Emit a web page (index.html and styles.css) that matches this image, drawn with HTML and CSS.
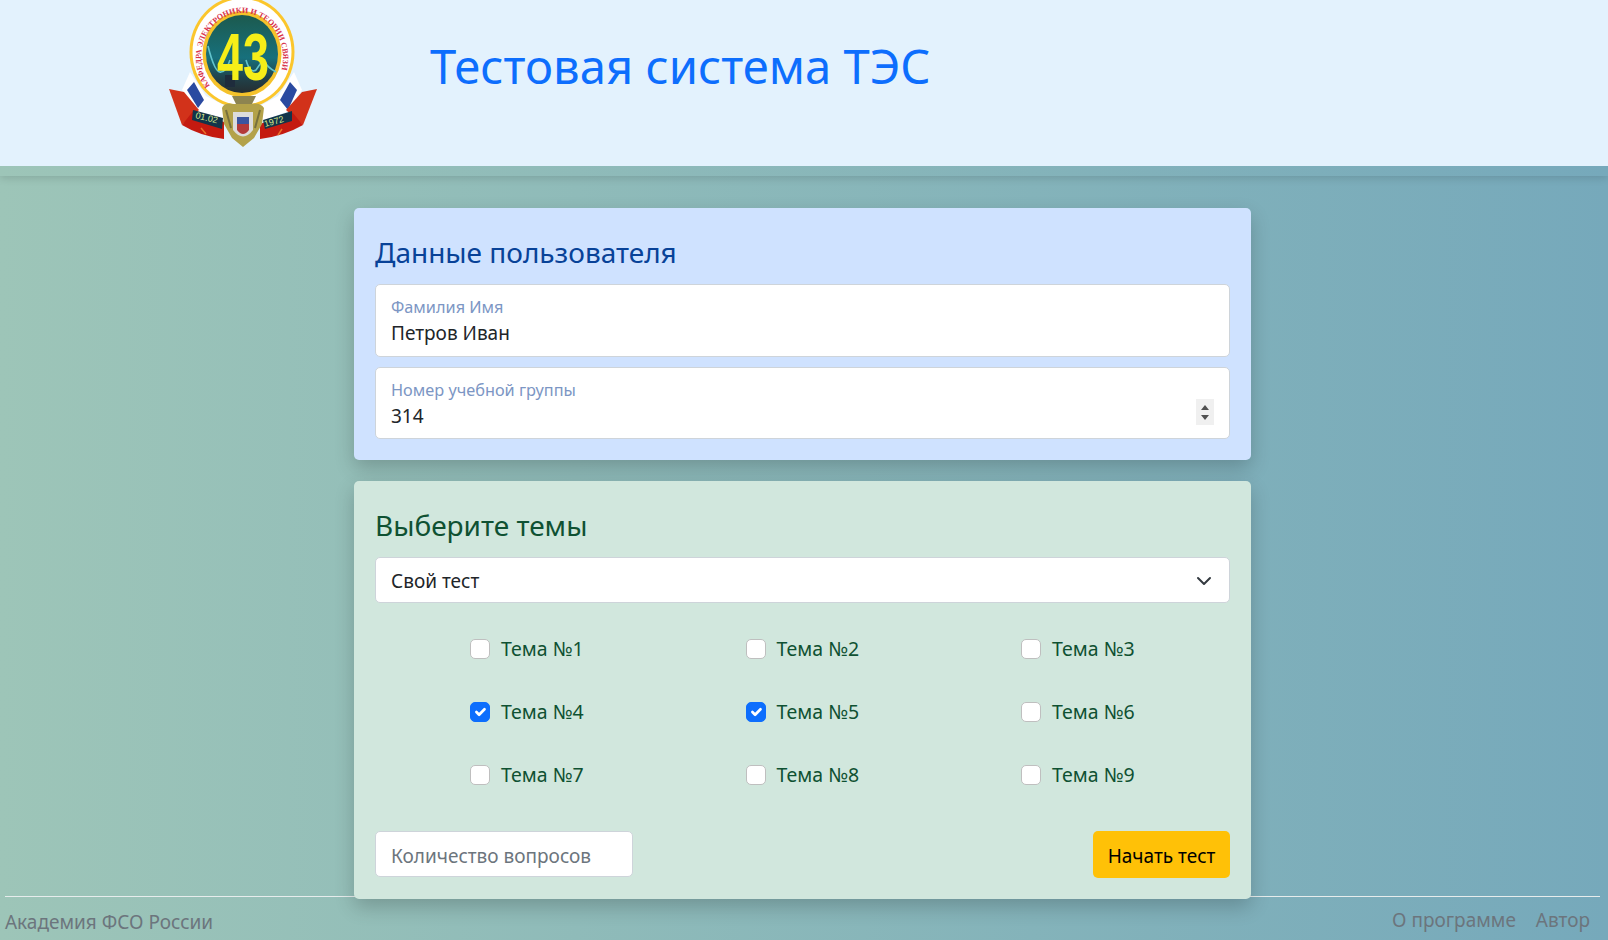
FILE: index.html
```html
<!DOCTYPE html>
<html lang="ru">
<head>
    <meta charset="UTF-8">
    <meta name="viewport" content="width=device-width, initial-scale=1.0">
    <title>Тестовая система ТЭС</title>
    <link rel="stylesheet" href="styles.css">
</head>
<body>
    <header class="top">
        <div class="logo">
            <svg width="152" height="150" viewBox="0 0 152 150">
                <defs>
                    <path id="ring-text" d="M42 86 A41 45 0 1 1 106 86"></path>
                    <linearGradient id="crt" x1="0" y1="0" x2="0" y2="1">
                        <stop offset="0" stop-color="#1c5a4e"></stop>
                        <stop offset="0.55" stop-color="#17707c"></stop>
                        <stop offset="0.8" stop-color="#20434c"></stop>
                        <stop offset="1" stop-color="#262d30"></stop>
                    </linearGradient>
                </defs>
                <!-- лента -->
                <path d="M22 72 L14 90 L30 112 L58 122 L62 108 L38 96 Z" fill="#fff"></path>
                <path d="M126 72 L134 90 L118 112 L92 122 L88 108 L110 96 Z" fill="#fff"></path>
                <path d="M19 90 L26 82 L36 100 L30 108 Z" fill="#2a4aa0"></path>
                <path d="M129 90 L122 82 L112 100 L120 110 Z" fill="#2a4aa0"></path>
                <path d="M1 89 L16 92 L31 110 L14 125 Z" fill="#d2321a"></path>
                <path d="M149 89 L134 92 L118 110 L135 125 Z" fill="#d2321a"></path>
                <path d="M14 125 L26 110 L56 122 L56 139 Q32 136 14 125 Z" fill="#c41a10"></path>
                <path d="M135 125 L124 112 L92 124 L92 139 Q116 136 135 125 Z" fill="#c41a10"></path>
                <path d="M33 128 L38 134 M114 129 L110 135" fill="none" stroke="#e8702a" stroke-width="1.5"></path>
                <path d="M25 110 L55 118 L54 129 L24 120 Z" fill="#12344a"></path>
                <path d="M124 111 L95 120 L97 129 L124 121 Z" fill="#12344a"></path>
                <text class="logo-date" x="27" y="118" transform="rotate(14 27 118)">01.02</text>
                <text class="logo-date" x="97" y="127" transform="rotate(-15 97 127)">1972</text>
                <!-- круг -->
                <ellipse cx="74" cy="52" rx="52.5" ry="56" fill="#fbc62c"></ellipse>
                <ellipse cx="74" cy="52" rx="49.5" ry="53" fill="#fff"></ellipse>
                <ellipse cx="74" cy="54" rx="39.5" ry="43" fill="#f5c22a"></ellipse>
                <ellipse cx="74" cy="54" rx="36" ry="39" fill="url(#crt)"></ellipse>
                <path d="M40 46 Q47 74 53 72 Q58 72 62 60 M78 60 Q82 74 88 70 Q92 64 95 60 Q100 68 108 72" fill="none" stroke="#62c4cc" stroke-width="1.6"></path>
                <path d="M57 75 H67 V87 H57 Z" fill="#1e2c3c"></path>
                <text class="logo-num" x="75" y="80" textLength="52" lengthAdjust="spacingAndGlyphs">43</text>
                <text class="logo-ring"><textPath href="#ring-text">КАФЕДРА ЭЛЕКТРОНИКИ И ТЕОРИИ СВЯЗИ</textPath></text>
                <!-- герб -->
                <path d="M64 96 H88 L84 104 H68 Z" fill="#8d8450"></path>
                <path d="M66 104 Q56 102 54 108 L56 124 L64 138 L75 147 L86 138 L94 124 L96 108 Q92 102 84 104 Z" fill="#b3a24a"></path>
                <path d="M58 110 L63 128 M92 110 L87 128" fill="none" stroke="#77703c" stroke-width="2"></path>
                <path d="M65 112 H85 V130 Q75 143 65 130 Z" fill="#dcdcdc"></path>
                <path d="M69 124 H81 V130 Q75 138 69 130 Z" fill="#b33a3a"></path>
                <path d="M69 117 H81 V124 H69 Z" fill="#3a55a0"></path>
            </svg>
        </div>
        <h1 class="top-title">Тестовая система ТЭС</h1>
    </header>

    <main class="content">
        <section class="card card-user">
            <h3 class="card-title">Данные пользователя</h3>
            <div class="field">
                <label class="field-label" for="fio">Фамилия Имя</label>
                <input class="field-input" id="fio" type="text" value="Петров Иван">
            </div>
            <div class="field">
                <label class="field-label" for="group">Номер учебной группы</label>
                <input class="field-input" id="group" type="text" value="314">
                <span class="spinner">
                    <svg width="18" height="26" viewBox="0 0 18 26"><path d="M9 6 L13 11 H5 Z M5 16 H13 L9 21 Z" fill="#505050"></path></svg>
                </span>
            </div>
        </section>

        <section class="card card-topics">
            <h3 class="card-title">Выберите темы</h3>
            <div class="select-box">
                <span>Свой тест</span>
                <svg width="16" height="16" viewBox="0 0 16 16"><path d="M2 5 L8 11 L14 5" fill="none" stroke="#343a40" stroke-width="2" stroke-linecap="round" stroke-linejoin="round"></path></svg>
            </div>
            <div class="topics">
                <label class="topic"><input type="checkbox"><span>Тема №1</span></label>
                <label class="topic"><input type="checkbox"><span>Тема №2</span></label>
                <label class="topic"><input type="checkbox"><span>Тема №3</span></label>
                <label class="topic"><input type="checkbox" checked><span>Тема №4</span></label>
                <label class="topic"><input type="checkbox" checked><span>Тема №5</span></label>
                <label class="topic"><input type="checkbox"><span>Тема №6</span></label>
                <label class="topic"><input type="checkbox"><span>Тема №7</span></label>
                <label class="topic"><input type="checkbox"><span>Тема №8</span></label>
                <label class="topic"><input type="checkbox"><span>Тема №9</span></label>
            </div>
            <div class="card-bottom">
                <input class="count-input" type="text" placeholder="Количество вопросов">
                <button class="start-btn">Начать тест</button>
            </div>
        </section>
    </main>

    <footer class="bottom">
        <span class="bottom-org">Академия ФСО России</span>
        <nav class="bottom-nav">
            <a href="#">О программе</a>
            <a href="#">Автор</a>
        </nav>
    </footer>
</body>
</html>
```

FILE: styles.css
```css
/* Общие стили */
* {
    box-sizing: border-box;
}

body {
    margin: 0;
    height: 940px;
    overflow: hidden;
    display: flex;
    flex-direction: column;
    font-family: 'Noto Sans', 'Open Sans', sans-serif;
    font-size: 19px;
    color: #212529;
    background: linear-gradient(90deg, #9dc5b8, #76a9bb);
}

/* Шапка: полоса под голубым фоном прозрачная, тень идет от нижнего края */
.top {
    height: 176px;
    flex: none;
    display: flex;
    background: linear-gradient(#e3f2fd, #e3f2fd) no-repeat top / 100% 166px;
    box-shadow: 0 2px 8px rgba(0, 0, 0, 0.14);
}

.logo {
    width: 430px;
    padding-left: 168px;
    flex: none;
}

.logo svg {
    display: block;
}

.logo-date {
    font-family: 'Liberation Sans', sans-serif;
    font-size: 9px;
    fill: #d8e88a;
}

.logo-num {
    font-family: 'Liberation Sans', sans-serif;
    font-weight: bold;
    font-size: 66px;
    text-anchor: middle;
    fill: #f6ee18;
}

.logo-ring {
    font-family: 'Liberation Serif', serif;
    font-size: 8px;
    font-weight: bold;
    fill: #d8314a;
}

.top-title {
    margin: 37px 0 0;
    font-size: 47.2px;
    font-weight: 400;
    line-height: 58px;
    color: #0d6efd;
}

/* Карточки */
.content {
    flex: 1;
    min-height: 0;
    width: 897px;
    margin-left: 354px;
    padding-top: 32px;
    position: relative;
    z-index: 1;
}

.card {
    padding: 25px 21px 21px;
    border-radius: 5px;
    box-shadow: 0 8px 20px rgba(0, 0, 0, 0.2);
}

.card-user {
    background: #cfe2ff;
    margin-bottom: 21px;
}

.card-topics {
    background: #d1e7dd;
    height: 418px;
}

.card-title {
    margin: 0 0 13px;
    font-size: 28px;
    font-weight: 400;
    line-height: 38px;
}

.card-user .card-title {
    color: #084298;
}

.card-topics .card-title {
    color: #0f5132;
}

/* Поля ввода */
.field {
    position: relative;
    height: 72.5px;
    margin-bottom: 10px;
    padding: 11px 15px 0;
    background: white;
    border: 1px solid #ced4da;
    border-radius: 5px;
}

.field:last-child {
    margin-bottom: 0;
}

.field-label {
    display: block;
    font-size: 16.3px;
    line-height: 22px;
    color: #7c96c4;
}

.field-input {
    display: block;
    width: 100%;
    padding: 0;
    border: none;
    outline: none;
    font: inherit;
    line-height: 30px;
    color: #212529;
    background: transparent;
}

.spinner {
    position: absolute;
    right: 15px;
    top: 31px;
    width: 18px;
    height: 26px;
    background: #f0f0f0;
}

.spinner svg {
    display: block;
}

.select-box {
    display: flex;
    justify-content: space-between;
    align-items: center;
    height: 46px;
    padding: 1px 17px 0 15px;
    background: white;
    border: 1px solid #ced4da;
    border-radius: 5px;
}

/* Темы */
.topics {
    display: grid;
    grid-template-columns: repeat(3, 275.5px);
    grid-auto-rows: 63px;
    margin-top: 14px;
    padding-left: 95px;
}

.topic {
    display: flex;
    align-items: center;
    gap: 11px;
    font-size: 19.5px;
    color: #0f5132;
}

.topic input {
    appearance: none;
    width: 20px;
    height: 20px;
    margin: 0;
    background: white;
    border: 1px solid #bfbfbf;
    border-radius: 5px;
}

.topic input:checked {
    border-color: #0d6efd;
    background: #0d6efd url("data:image/svg+xml,%3Csvg xmlns='http://www.w3.org/2000/svg' viewBox='0 0 20 20'%3E%3Cpath fill='none' stroke='white' stroke-linecap='round' stroke-linejoin='round' stroke-width='3' d='M6 10l3 3l6-6'/%3E%3C/svg%3E") center/100% no-repeat;
}

.card-bottom {
    display: flex;
    justify-content: space-between;
    margin-top: 25px;
}

.count-input {
    width: 258px;
    height: 46px;
    padding: 3px 15px 0;
    font: inherit;
    background: white;
    border: 1px solid #ced4da;
    border-radius: 5px;
}

.count-input::placeholder {
    color: #6c757d;
}

.start-btn {
    width: 137px;
    height: 47px;
    padding: 2px 0 0;
    font: inherit;
    color: black;
    background: #ffc107;
    border: none;
    border-radius: 5px;
}

/* Подвал */
.bottom {
    flex: none;
    height: 44px;
    margin: 0 8px 0 5px;
    padding: 0 10px 0 0;
    display: flex;
    justify-content: space-between;
    align-items: flex-start;
    border-top: 1px solid #e6ecec;
    color: #6c757d;
}

.bottom-org {
    line-height: 50px;
}

.bottom-nav {
    display: flex;
    gap: 20px;
    line-height: 46px;
}

.bottom-nav a {
    color: #6c757d;
    text-decoration: none;
}
```
